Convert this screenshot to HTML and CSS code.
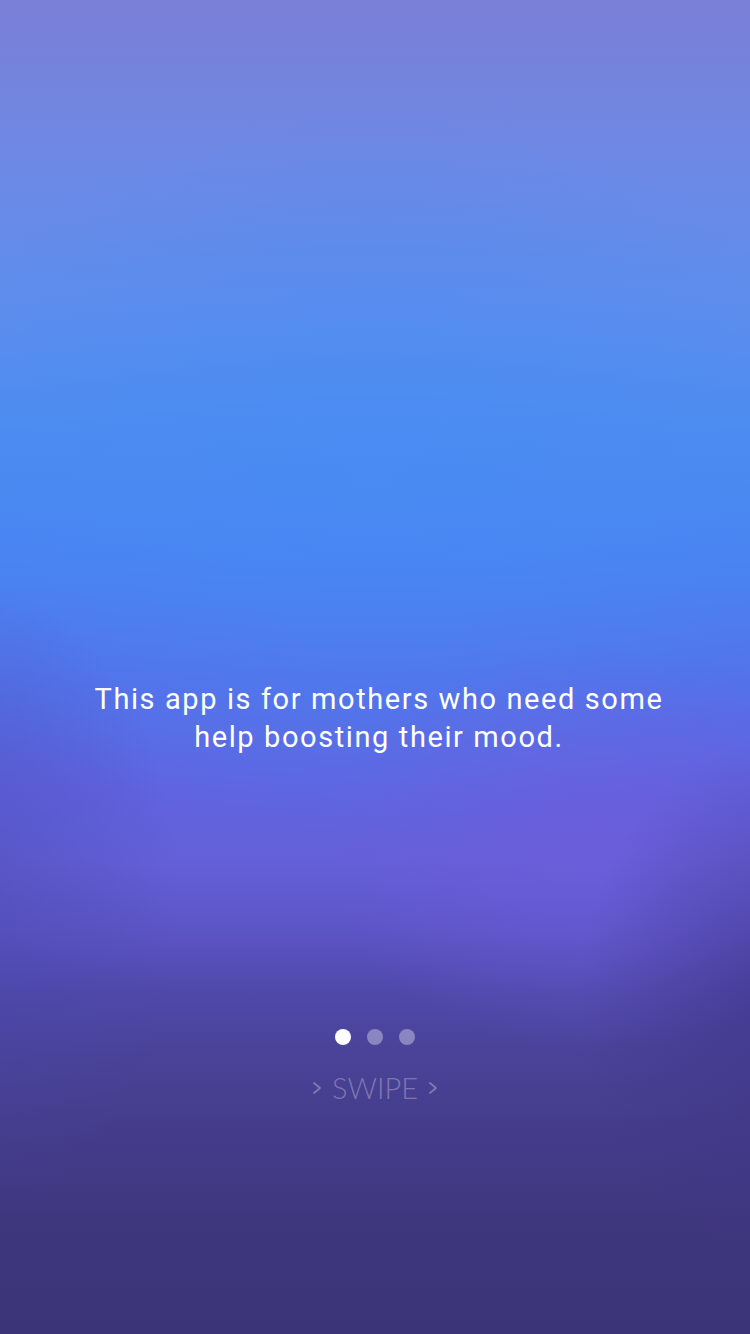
FILE: index.html
```html
<!DOCTYPE html>
<html lang="en">
<head>
<meta charset="utf-8">
<title>Onboarding</title>
<link rel="stylesheet" href="styles.css">
</head>
<body>
<main class="screen">
  <p class="intro">This app is for mothers who need some<br>help boosting their mood.</p>
  <div class="dots">
    <span class="dot dot-active"></span>
    <span class="dot"></span>
    <span class="dot"></span>
  </div>
  <div class="swipe">
    <svg class="chev" width="10" height="14" viewBox="0 0 10 14"><polyline points="2,2 8,7 2,12" fill="none" stroke="currentColor" stroke-width="1.8" stroke-linecap="round" stroke-linejoin="round"/></svg>
    <span class="swipe-label">SWIPE</span>
    <svg class="chev" width="10" height="14" viewBox="0 0 10 14"><polyline points="2,2 8,7 2,12" fill="none" stroke="currentColor" stroke-width="1.8" stroke-linecap="round" stroke-linejoin="round"/></svg>
  </div>
</main>
</body>
</html>
```
FILE: styles.css
```css
html, body {
  margin: 0;
  padding: 0;
}
body {
  width: 750px;
  height: 1334px;
  overflow: hidden;
}
.screen {
  width: 750px;
  height: 1334px;
  box-sizing: border-box;
  padding-top: 680px;
  display: flex;
  flex-direction: column;
  align-items: center;
  background:
    radial-gradient(ellipse 200px 260px at 780px 1000px, rgba(60, 50, 130, 0.55), rgba(60, 50, 130, 0) 100%),
    radial-gradient(ellipse 280px 200px at 600px 850px, rgba(112, 92, 220, 0.6), rgba(112, 92, 220, 0) 100%),
    radial-gradient(ellipse 220px 320px at -40px 900px, rgba(70, 70, 170, 0.45), rgba(70, 70, 170, 0) 100%),
    radial-gradient(ellipse 520px 360px at 375px 480px, rgba(70, 140, 245, 0.55), rgba(70, 140, 245, 0) 100%),
    linear-gradient(to bottom,
      #7a7fd6 0px,
      #6e88e4 150px,
      #5f8dec 300px,
      #4d8cf0 430px,
      #4a83f1 560px,
      #5471e9 680px,
      #6063e0 790px,
      #6460d8 860px,
      #5c55c6 930px,
      #5049ab 990px,
      #4a4399 1050px,
      #453d8c 1120px,
      #3f377e 1220px,
      #3c3478 1334px);
  font-family: Roboto, "Noto Sans", sans-serif;
}
.intro {
  margin: 0;
  padding-left: 8px;
  color: #ffffff;
  font-size: 29px;
  line-height: 38px;
  letter-spacing: 1.6px;
  text-align: center;
  font-weight: 400;
}
.dots {
  margin-top: 273px;
  display: flex;
  gap: 16px;
}
.dot {
  width: 16px;
  height: 16px;
  border-radius: 50%;
  background: rgba(255, 255, 255, 0.35);
}
.dot-active {
  background: #ffffff;
}
.swipe {
  margin-top: 26px;
  display: flex;
  align-items: center;
  gap: 10px;
  color: rgba(255, 255, 255, 0.3);
  font-family: Lato, "Open Sans", sans-serif;
  font-weight: 300;
  font-size: 29px;
  line-height: 34px;
}
.chev {
  display: block;
}
```
